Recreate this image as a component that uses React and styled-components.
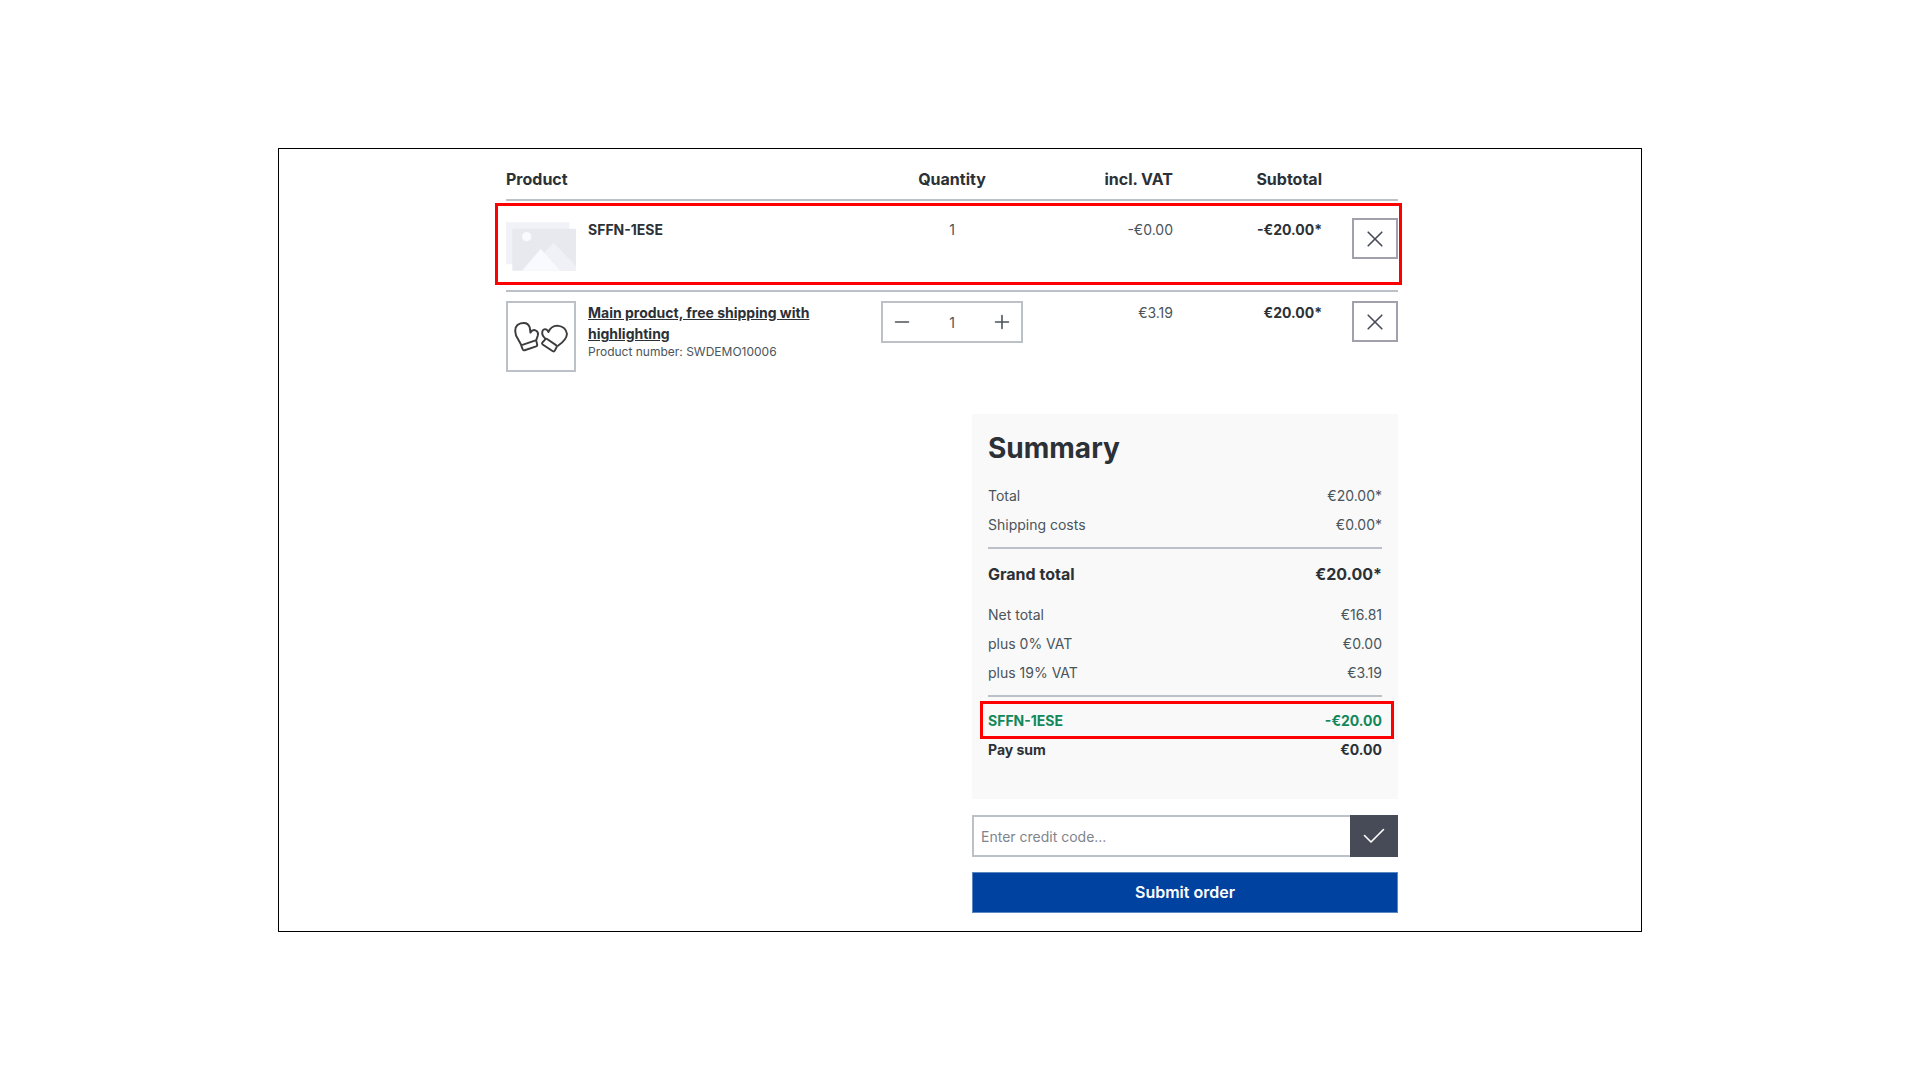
import { useState } from "react";
import styled, { createGlobalStyle } from "styled-components";

const GlobalStyle = createGlobalStyle`
  * {
    box-sizing: border-box;
  }
  body {
    margin: 0;
    background-color: #fff;
    color: #4a545b;
    font-family: Inter, "Liberation Sans", sans-serif;
    font-size: 14px;
    line-height: 21px;
  }
  button,
  input {
    font: inherit;
  }
`;

const Page = styled.div`
  min-height: 100vh;
  display: flex;
  justify-content: center;
  align-items: center;
`;

const Frame = styled.main`
  width: 100%;
  max-width: 1364px;
  padding: 0 16px 18px 0;
  border: 1px solid #000;
`;

const Content = styled.div`
  max-width: 892px;
  margin: 0 auto;
`;

const CartTable = styled.table`
  width: 100%;
  table-layout: fixed;
  border-spacing: 0;
`;

const Th = styled.th`
  width: ${(props) => props.$width || "auto"};
  padding: 18px 0 8px;
  border-bottom: 2px solid #bcc1c7;
  color: #2b3136;
  font-size: 16px;
  line-height: 24px;
  font-weight: 700;
  text-align: ${(props) => props.$align || "left"};
`;

const Td = styled.td`
  padding: 9px 0;
  vertical-align: top;
  text-align: ${(props) => props.$align || "left"};
  font-weight: ${(props) => (props.$bold ? 700 : 400)};
  color: ${(props) => (props.$bold ? "#2b3136" : "inherit")};
`;

// the promotion row gets the red marker frame, drawn from its first cell
const PromotionRow = styled.tr`
  position: relative;
  height: 91px;
  ${Td} {
    padding: 17px 0 8px;
    border-bottom: 2px solid #bcc1c7;
  }
  ${Td}:first-child::after {
    content: "";
    position: absolute;
    inset: 2px -4px 7px -11px;
    border: 3px solid #f00;
    pointer-events: none;
  }
`;

const Product = styled.div`
  display: flex;
  align-items: flex-start;
  gap: 12px;
`;

const Placeholder = styled.svg`
  flex: none;
  width: 70px;
  height: 57px;
`;

const Thumbnail = styled.a`
  flex: none;
  display: flex;
  width: 70px;
  height: 71px;
  border: 2px solid #bcc1c7;
  svg {
    width: 100%;
    height: 100%;
  }
`;

const CellText = styled.div`
  padding-top: 1px;
`;

const ProductName = styled.div`
  color: #2b3136;
  font-weight: 700;
`;

const ProductLink = styled.a`
  color: #2b3136;
  font-weight: 700;
  text-decoration: underline;
`;

const ProductNumber = styled.div`
  font-size: 12px;
  line-height: 16px;
`;

const Stepper = styled.div`
  display: flex;
  height: 42px;
  border: 2px solid #bcc1c7;
`;

const StepButton = styled.button`
  width: 38px;
  padding: 0;
  border: 0;
  background: none;
  color: #4a545b;
  display: flex;
  justify-content: center;
  align-items: center;
`;

const StepInput = styled.input`
  flex: 1;
  min-width: 0;
  padding: 0;
  border: 0;
  background: none;
  color: inherit;
  text-align: center;
`;

const RemoveButton = styled.button`
  width: 46px;
  height: 41px;
  margin-left: auto;
  padding: 0;
  border: 2px solid #a0a1aa;
  background: none;
  color: #474a57;
  display: flex;
  justify-content: center;
  align-items: center;
`;

const Aside = styled.aside`
  max-width: 426px;
  margin: 33px 0 0 auto;
`;

const Summary = styled.section`
  padding: 17px 16px 35px;
  background-color: #f9f9f9;
`;

const SummaryTitle = styled.h2`
  margin: 0 0 16px;
  color: #2b3136;
  font-size: 28px;
  line-height: 34px;
  font-weight: 700;
`;

const SummaryList = styled.dl`
  margin: 0;
`;

const SummaryRow = styled.div`
  position: relative;
  display: flex;
  justify-content: space-between;
  line-height: 29px;
  dd {
    margin: 0;
  }
`;

const StrongRow = styled(SummaryRow)`
  color: #2b3136;
  font-weight: 700;
`;

const GrandTotalRow = styled(StrongRow)`
  margin: 8px 0 14px;
  padding-top: 13px;
  border-top: 2px solid #bcc1c7;
  font-size: 16px;
  line-height: 24px;
`;

const DiscountRow = styled(StrongRow)`
  margin-top: 8px;
  padding-top: 9px;
  border-top: 2px solid #bcc1c7;
  color: #12885a;
  &::after {
    content: "";
    position: absolute;
    inset: 4px -12px -4px -8px;
    border: 3px solid #f00;
    pointer-events: none;
  }
`;

const CodeForm = styled.form`
  display: flex;
  height: 42px;
  margin-top: 16px;
`;

const CodeInput = styled.input`
  flex: 1;
  min-width: 0;
  padding: 0 7px;
  border: 2px solid #bcc1c7;
  border-right: 0;
  background-color: #fff;
  &::placeholder {
    color: #7f848e;
    opacity: 1;
  }
`;

const CodeButton = styled.button`
  width: 48px;
  padding: 0;
  border: 0;
  background-color: #474a57;
  color: #fff;
  display: flex;
  justify-content: center;
  align-items: center;
`;

const SubmitButton = styled.button`
  width: 100%;
  height: 41px;
  margin-top: 15px;
  border: 1px solid #5a87c4;
  background-color: #0042a0;
  color: #fff;
  font-size: 16px;
  font-weight: 600;
  display: block;
`;

const Icon = ({ d, width = 16, height = 16 }) => (
  <svg width={width} height={height} viewBox={`0 0 ${width} ${height}`} aria-hidden="true">
    <path
      d={d}
      fill="none"
      stroke="currentColor"
      strokeWidth="1.6"
      strokeLinecap="round"
      strokeLinejoin="round"
    />
  </svg>
);

const MINUS = "M1.5 8h13";
const PLUS = "M1.5 8h13M8 1.5v13";
const CLOSE = "M1.2 1.2l13.6 13.6M14.8 1.2L1.2 14.8";
const CHECK = "M1.5 7.5L8 14L20.5 1.5";

const PlaceholderImage = () => (
  <Placeholder viewBox="0 0 210 171" aria-hidden="true">
    <path fill="#f1f2f7" d="M0 13h190v126H0z" />
    <path fill="#e8e9ef" d="M19 32h191v126H19z" />
    <circle cx="62" cy="56" r="14" fill="#f9fafe" />
    <path fill="#f0f1f7" d="M104 114L143 74L210 145V158H140z" />
    <path fill="#f9fafe" d="M48 158L104 93L163 158z" />
  </Placeholder>
);

const Mittens = () => (
  <svg viewBox="-2 -3 206 206" aria-hidden="true">
    <g fill="none" stroke="#3c3c3e" strokeWidth="6" strokeLinejoin="round" strokeLinecap="round">
      <path d="M39 126L23 97Q14 66 37 59Q60 53 66 72L68 88Q75 76 86 82Q94 87 91 97L86 112" />
      <path d="M43 126L82 113Q86 112 87 116L89 126Q90 130 86 131L50 143Q46 144 44 140L40 130Q39 127 43 126z" />
      <path d="M115 107Q103 97 105 85Q108 75 117 78Q122 80 124 86Q132 67 152 66Q179 69 182 92Q181 110 154 129" />
      <path d="M115 108Q117 106 120 108L148 127Q152 130 150 133L144 144Q142 148 138 146L106 125Q103 122 105 119z" />
    </g>
  </svg>
);

function App() {
  const [quantity, setQuantity] = useState(1);

  return (
    <Page>
      <GlobalStyle />
      <Frame>
        <Content>
          <CartTable>
            <thead>
              <tr>
                <Th scope="col">Product</Th>
                <Th scope="col" $width="142px" $align="center">
                  Quantity
                </Th>
                <Th scope="col" $width="150px" $align="right">
                  incl. VAT
                </Th>
                <Th scope="col" $width="149px" $align="right">
                  Subtotal
                </Th>
                <Th $width="76px" />
              </tr>
            </thead>
            <tbody>
              <PromotionRow>
                <Td>
                  <Product>
                    <PlaceholderImage />
                    <CellText>
                      <ProductName>SFFN-1ESE</ProductName>
                    </CellText>
                  </Product>
                </Td>
                <Td $align="center">
                  <CellText>1</CellText>
                </Td>
                <Td $align="right">
                  <CellText>-€0.00</CellText>
                </Td>
                <Td $align="right" $bold>
                  <CellText>-€20.00*</CellText>
                </Td>
                <Td>
                  <RemoveButton type="button" aria-label="Remove SFFN-1ESE">
                    <Icon d={CLOSE} />
                  </RemoveButton>
                </Td>
              </PromotionRow>
              <tr>
                <Td>
                  <Product>
                    <Thumbnail href="#" aria-label="Main product">
                      <Mittens />
                    </Thumbnail>
                    <CellText>
                      <ProductLink href="#">
                        Main product, free shipping with highlighting
                      </ProductLink>
                      <ProductNumber>Product number: SWDEMO10006</ProductNumber>
                    </CellText>
                  </Product>
                </Td>
                <Td>
                  <Stepper>
                    <StepButton
                      type="button"
                      aria-label="Decrease quantity"
                      onClick={() => setQuantity(Math.max(1, quantity - 1))}
                    >
                      <Icon d={MINUS} />
                    </StepButton>
                    <StepInput
                      aria-label="Quantity"
                      value={quantity}
                      onChange={(e) => setQuantity(Number(e.target.value) || 1)}
                    />
                    <StepButton
                      type="button"
                      aria-label="Increase quantity"
                      onClick={() => setQuantity(quantity + 1)}
                    >
                      <Icon d={PLUS} />
                    </StepButton>
                  </Stepper>
                </Td>
                <Td $align="right">
                  <CellText>€3.19</CellText>
                </Td>
                <Td $align="right" $bold>
                  <CellText>€20.00*</CellText>
                </Td>
                <Td>
                  <RemoveButton type="button" aria-label="Remove main product">
                    <Icon d={CLOSE} />
                  </RemoveButton>
                </Td>
              </tr>
            </tbody>
          </CartTable>

          <Aside>
            <Summary>
              <SummaryTitle>Summary</SummaryTitle>
              <SummaryList>
                <SummaryRow>
                  <dt>Total</dt>
                  <dd>€20.00*</dd>
                </SummaryRow>
                <SummaryRow>
                  <dt>Shipping costs</dt>
                  <dd>€0.00*</dd>
                </SummaryRow>
                <GrandTotalRow>
                  <dt>Grand total</dt>
                  <dd>€20.00*</dd>
                </GrandTotalRow>
                <SummaryRow>
                  <dt>Net total</dt>
                  <dd>€16.81</dd>
                </SummaryRow>
                <SummaryRow>
                  <dt>plus 0% VAT</dt>
                  <dd>€0.00</dd>
                </SummaryRow>
                <SummaryRow>
                  <dt>plus 19% VAT</dt>
                  <dd>€3.19</dd>
                </SummaryRow>
                <DiscountRow>
                  <dt>SFFN-1ESE</dt>
                  <dd>-€20.00</dd>
                </DiscountRow>
                <StrongRow>
                  <dt>Pay sum</dt>
                  <dd>€0.00</dd>
                </StrongRow>
              </SummaryList>
            </Summary>
            <CodeForm onSubmit={(e) => e.preventDefault()}>
              <CodeInput type="text" aria-label="Credit code" placeholder="Enter credit code..." />
              <CodeButton type="submit" aria-label="Apply code">
                <Icon d={CHECK} width={22} height={16} />
              </CodeButton>
            </CodeForm>
            <SubmitButton type="button">Submit order</SubmitButton>
          </Aside>
        </Content>
      </Frame>
    </Page>
  );
}

export default App;
